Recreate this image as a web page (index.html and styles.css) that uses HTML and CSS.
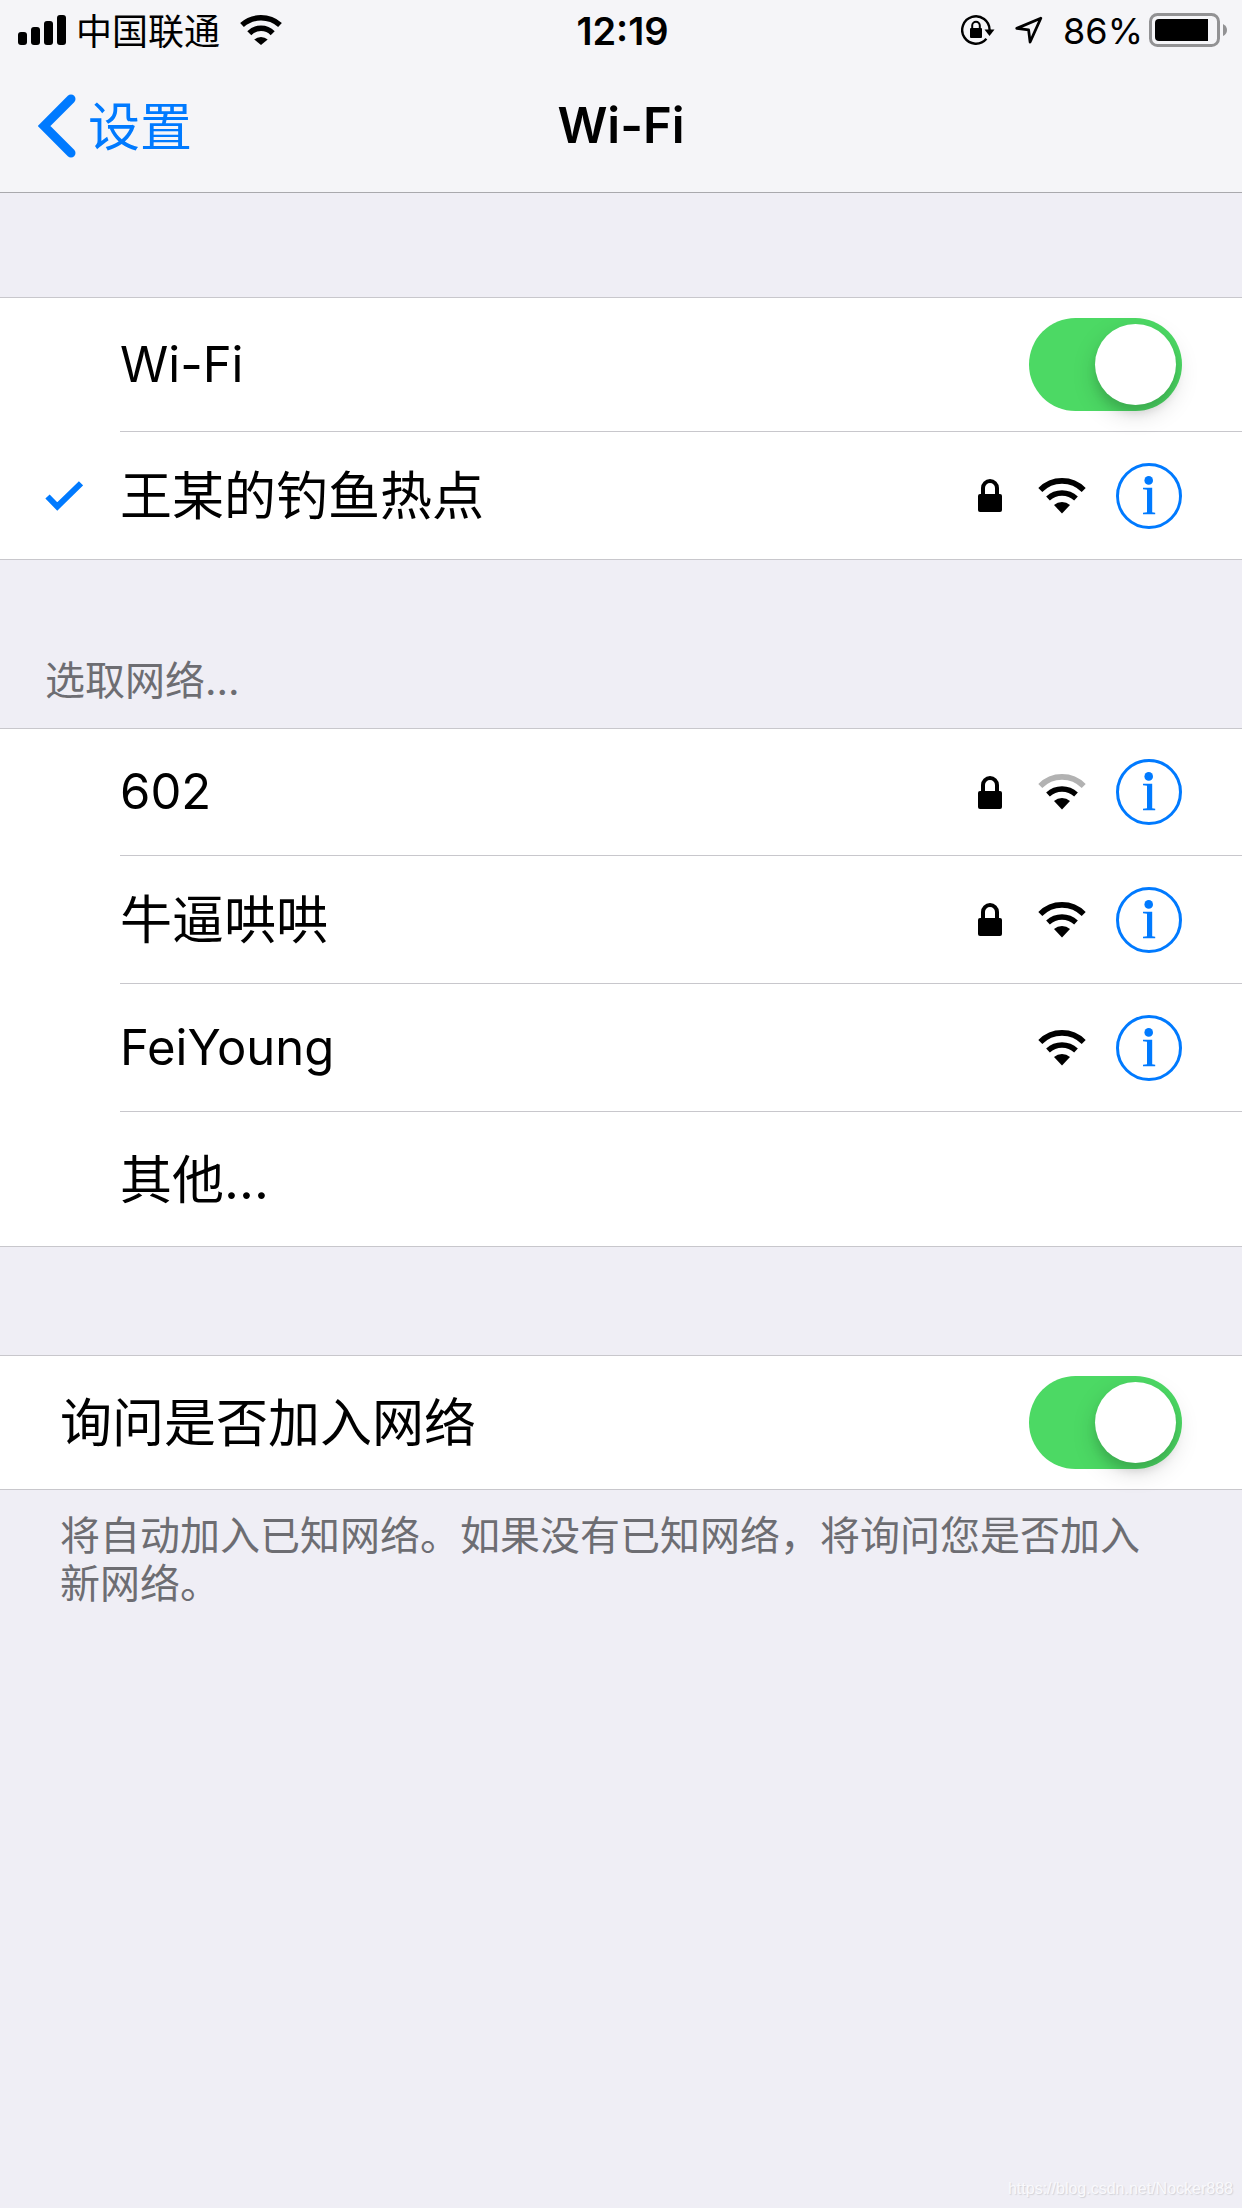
FILE: index.html
```html
<!DOCTYPE html>
<html lang="zh-CN">
<head>
<meta charset="utf-8">
<meta name="viewport" content="width=device-width, initial-scale=1">
<title>Wi-Fi</title>
<link rel="stylesheet" href="styles.css">
</head>
<body>
<svg class="defs" width="0" height="0" aria-hidden="true">
  <symbol id="wifi" viewBox="0 0 48 36">
    <path class="wifi-outer" d="M2.3 12A30.4 30.4 0 0 1 45.7 12" fill="none" stroke-width="5.6"/>
    <path d="M10 20.5A20.6 20.6 0 0 1 38 20.5" fill="none" stroke="#000" stroke-width="5.4"/>
    <path d="M16 27A12.5 12.5 0 0 1 32 27L24 35.6Z"/>
  </symbol>
  <symbol id="lock" viewBox="0 0 24 33">
    <rect y="15" width="24" height="18" rx="2"/>
    <path d="M5 16V9a7 7 0 0 1 14 0v7" fill="none" stroke="#000" stroke-width="4"/>
  </symbol>
  <symbol id="info" viewBox="0 0 66 66">
    <circle cx="33" cy="33" r="31.5" fill="none" stroke="currentColor" stroke-width="3"/>
    <circle cx="32.7" cy="17.4" r="4.3" fill="currentColor"/>
    <path d="M27 24.8h9.2v24.4l3 .6v1.4H27v-1.4l4-.6V26.8L27 26.2z" fill="currentColor"/>
  </symbol>
</svg>

<header class="header">
  <div class="status">
    <div class="status-left">
      <svg width="48" height="30" viewBox="0 0 48 30" aria-hidden="true">
        <rect y="17" width="9" height="13" rx="3"/><rect x="13" y="12" width="9" height="18" rx="3"/>
        <rect x="26" y="6" width="9" height="24" rx="3"/><rect x="39" width="9" height="30" rx="3"/>
      </svg>
      <span class="carrier">中国联通</span>
      <svg width="42" height="30" viewBox="0 0 42 30" aria-hidden="true">
        <path d="M2 10A28.7 28.7 0 0 1 40 10M9.3 18.2A16.2 16.2 0 0 1 32.7 18.2" fill="none" stroke="#000" stroke-width="5.6"/>
        <path d="M14.3 24.5A10 10 0 0 1 27.7 24.5L21 30Z"/>
      </svg>
    </div>
    <time class="clock">12:19</time>
    <div class="status-right">
      <svg width="34" height="30" viewBox="0 0 34 30" aria-hidden="true">
        <path d="M28.6 15A13.7 13.7 0 1 0 25.4 23.8" fill="none" stroke="#000" stroke-width="2.4"/>
        <path d="M23.5 14.5h10l-5 6.5z"/>
        <rect x="9" y="13" width="12" height="10" rx="1"/>
        <path d="M11.2 14v-3.4a3.8 3.8 0 0 1 7.6 0V14" fill="none" stroke="#000" stroke-width="2"/>
      </svg>
      <svg width="28" height="28" viewBox="0 0 28 28" aria-hidden="true">
        <path d="M25.8 2.2L1.8 12.4L13.6 13.9L15.1 26Z" fill="none" stroke="#000" stroke-width="2.8" stroke-linejoin="round"/>
      </svg>
      <span class="percent">86%</span>
      <svg class="battery" width="78" height="34" viewBox="0 0 78 34" aria-hidden="true">
        <rect x="1.5" y="1.5" width="68" height="31" rx="7" fill="none" stroke="#929294" stroke-width="3"/>
        <path d="M10 6h49v22H10q-4 0-4-4V10q0-4 4-4z"/>
        <path d="M74 11q4 2 4 6t-4 6z" fill="#929294"/>
      </svg>
    </div>
  </div>
  <nav class="nav">
    <a class="back" href="#">
      <svg width="38" height="64" viewBox="0 0 38 64" aria-hidden="true">
        <path d="M33 5L6 32L33 59" fill="none" stroke="currentColor" stroke-width="9" stroke-linecap="round"/>
      </svg>
      <span class="back-label">设置</span>
    </a>
    <h1 class="title">Wi-Fi</h1>
  </nav>
</header>

<main class="main">
  <ul class="group">
    <li class="row row-tall">
      <span class="lead"></span>
      <div class="cell">
        <label class="name latin" for="wifi-on">Wi-Fi</label>
        <input class="switch" type="checkbox" id="wifi-on" checked>
      </div>
    </li>
    <li class="row">
      <span class="lead">
        <svg width="38" height="31" viewBox="0 0 38 31" aria-hidden="true">
          <path d="M2.5 16.5L12.3 26.5L36 3.3" fill="none" stroke="#007aff" stroke-width="6"/>
        </svg>
      </span>
      <div class="cell">
        <button class="name" type="button">王某的钓鱼热点</button>
        <svg class="lock" aria-hidden="true"><use href="#lock"/></svg>
        <svg class="wifi" aria-hidden="true"><use href="#wifi"/></svg>
        <button class="info" type="button" aria-label="详细信息"><svg><use href="#info"/></svg></button>
      </div>
    </li>
  </ul>

  <h2 class="group-title">选取网络…</h2>
  <ul class="group">
    <li class="row">
      <span class="lead"></span>
      <div class="cell">
        <button class="name latin" type="button">602</button>
        <svg class="lock" aria-hidden="true"><use href="#lock"/></svg>
        <svg class="wifi wifi-weak" aria-hidden="true"><use href="#wifi"/></svg>
        <button class="info" type="button" aria-label="详细信息"><svg><use href="#info"/></svg></button>
      </div>
    </li>
    <li class="row">
      <span class="lead"></span>
      <div class="cell">
        <button class="name" type="button">牛逼哄哄</button>
        <svg class="lock" aria-hidden="true"><use href="#lock"/></svg>
        <svg class="wifi" aria-hidden="true"><use href="#wifi"/></svg>
        <button class="info" type="button" aria-label="详细信息"><svg><use href="#info"/></svg></button>
      </div>
    </li>
    <li class="row">
      <span class="lead"></span>
      <div class="cell">
        <button class="name latin" type="button">FeiYoung</button>
        <svg class="wifi" aria-hidden="true"><use href="#wifi"/></svg>
        <button class="info" type="button" aria-label="详细信息"><svg><use href="#info"/></svg></button>
      </div>
    </li>
    <li class="row row-tall">
      <span class="lead"></span>
      <div class="cell">
        <button class="name" type="button">其他…</button>
      </div>
    </li>
  </ul>

  <ul class="group group-ask">
    <li class="row row-tall">
      <div class="cell">
        <label class="name" for="ask-join">询问是否加入网络</label>
        <input class="switch" type="checkbox" id="ask-join" checked>
      </div>
    </li>
  </ul>
  <p class="note">将自动加入已知网络。如果没有已知网络，将询问您是否加入新网络。</p>
</main>

<footer class="source">https://blog.csdn.net/Nocker888</footer>
</body>
</html>
```

FILE: styles.css
```css
* {
  box-sizing: border-box;
}

body {
  margin: 0;
  min-height: 100vh;
  display: flex;
  flex-direction: column;
  background: #efeef5;
  color: #000;
  font-family: Inter, "Noto Sans CJK SC", sans-serif;
}

.defs {
  position: absolute;
}

svg {
  display: block;
  flex: none;
}

button {
  padding: 0;
  border: 0;
  background: none;
  color: inherit;
  font: inherit;
  text-align: left;
}

/* Header */
.header {
  background: #f5f5f8;
  border-bottom: 1px solid #a9a9ad;
}

.status,
.nav {
  display: grid;
  grid-template-columns: 1fr auto 1fr;
  align-items: center;
}

.status {
  height: 60px;
  padding: 0 15px 0 18px;
  font-size: 36px;
  line-height: 48px;
}

.status-left,
.status-right {
  display: flex;
  align-items: center;
}

.status-left {
  gap: 10px;
}

.carrier {
  padding: 3px 10px 0 0;
}

.clock {
  padding-top: 2px;
  font-size: 38px;
  font-weight: 600;
}

.status-right {
  justify-content: flex-end;
  gap: 20px;
}

.percent {
  padding-top: 2px;
}

.battery {
  margin-left: -14px;
}

.nav {
  height: 132px;
  padding: 0 38px;
}

.back {
  display: flex;
  align-items: center;
  gap: 12px;
  color: #007aff;
  font-size: 52px;
  line-height: 64px;
  text-decoration: none;
}

.back-label {
  padding-top: 3px;
}

.title {
  margin: 0;
  font-size: 49px;
  line-height: 64px;
  font-weight: 600;
}

/* Grouped lists */
.main {
  padding-top: 104px;
}

.group {
  margin: 0;
  padding: 0;
  list-style: none;
  background: #fff;
}

.row {
  display: flex;
  min-height: 128px;
}

.row-tall {
  min-height: 135px;
}

.row:first-child {
  border-top: 1px solid #c8c7cc;
}

.row:last-child {
  border-bottom: 1px solid #c8c7cc;
}

.lead {
  flex: none;
  width: 120px;
  padding-left: 45px;
  display: flex;
  align-items: center;
}

.cell {
  flex: 1;
  min-width: 0;
  display: flex;
  align-items: center;
  padding-right: 60px;
  border-bottom: 1px solid #c8c7cc;
}

.row:last-child .cell {
  border-bottom: 0;
}

.name {
  flex: 1;
  padding-top: 3px;
  font-size: 52px;
  line-height: 64px;
}

.latin {
  padding-top: 0;
  font-size: 49px;
}

.lock {
  width: 24px;
  height: 33px;
  margin-right: 36px;
}

.wifi {
  width: 48px;
  height: 36px;
  margin-right: 30px;
}

.wifi-outer {
  stroke: var(--outer, #000);
}

.wifi-weak {
  --outer: #b2b2b2;
}

.info,
.info svg {
  width: 66px;
  height: 66px;
  color: #007aff;
}

.switch {
  appearance: none;
  flex: none;
  width: 153px;
  height: 93px;
  margin: 0;
  padding: 6px;
  display: flex;
  border-radius: 47px;
  background: #e5e5ea;
}

.switch:checked {
  justify-content: flex-end;
  background: #4cd964;
}

.switch::before {
  content: "";
  width: 81px;
  height: 81px;
  border-radius: 50%;
  background: #fff;
  box-shadow: 0 9px 24px rgba(0, 0, 0, 0.15), 0 8px 10px rgba(0, 0, 0, 0.1);
}

.group-title {
  margin: 0;
  padding: 97px 45px 23px;
  color: #6d6d72;
  font-size: 40px;
  line-height: 48px;
  font-weight: 400;
}

.group-ask {
  margin-top: 108px;
}

.group-ask .row {
  padding-left: 60px;
}

.note {
  margin: 0;
  padding: 22px 100px 0 60px;
  color: #6d6d72;
  font-size: 40px;
  line-height: 48px;
}

.source {
  margin-top: auto;
  padding: 0 9px 9px;
  color: #f9f9fc;
  font-family: "Liberation Sans", sans-serif;
  font-size: 16px;
  line-height: 20px;
  text-align: right;
  text-shadow: 1px 1px 1px #d2d2d8;
}
```
